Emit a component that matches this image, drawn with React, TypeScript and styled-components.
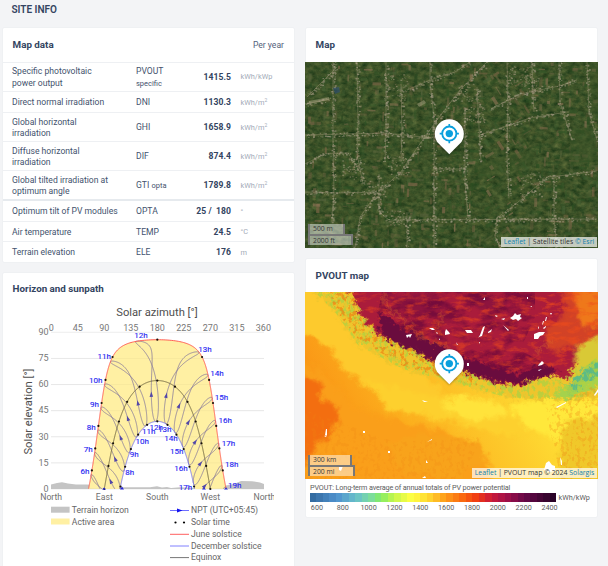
import React from 'react';
import styled, { createGlobalStyle } from 'styled-components';

const Global = createGlobalStyle`
  * { box-sizing: border-box; }
  body { margin: 0; background: #f3f4f6; overflow: hidden; font-family: Roboto, 'Liberation Sans', sans-serif; color: #334461; }
  filter { color-interpolation-filters: sRGB; }
`;

const Page = styled.main`
  width: 608px;
  height: 566px;
  overflow: hidden;
  padding-left: 3px;
  background: #f3f4f6;
`;
const PageTitle = styled.h1`
  margin: 0;
  padding: 3px 0 0 8.5px;
  height: 28px;
  font-size: 10px;
  line-height: 13px;
  font-weight: 600;
`;
const Columns = styled.div`
  display: grid;
  grid-template-columns: 291px 293px;
  column-gap: 11px;
  align-items: start;
`;
const Column = styled.div`
  display: flex;
  flex-direction: column;
  gap: 11px;
  min-width: 0;
`;
const Card = styled.section<{ $height: number; $inset?: boolean }>`
  height: ${(p) => p.$height}px;
  margin: 0 ${(p) => (p.$inset ? 1 : 0)}px;
  background: #fff;
  border-radius: 1px;
  box-shadow: 0 0 1px rgba(50, 70, 90, 0.16);
`;
const CardHeader = styled.header<{ $height: number }>`
  display: flex;
  align-items: center;
  justify-content: space-between;
  height: ${(p) => p.$height}px;
  padding: 0 10px 0 9.6px;
`;
const CardTitle = styled.h2`
  margin: 0;
  font-size: 9.8px;
  line-height: 12px;
  font-weight: 700;
`;
const Period = styled.span`
  font-size: 8.6px;
  color: #53617a;
`;
const Row = styled.div<{ $height: number; $thick?: boolean; $shift: number }>`
  display: grid;
  grid-template-columns: 124px 50px 45px 1fr;
  align-items: center;
  height: ${(p) => p.$height}px;
  padding: ${(p) => p.$shift}px 0 0 9px;
  border-top: ${(p) => (p.$thick ? '2px solid #e6eaee' : '1px solid #eef0f3')};
  font-size: 8.6px;
  line-height: 11.4px;
  color: #43526d;
`;
const RowName = styled.span`
  white-space: pre-line;
`;
const Code = styled.span`
  small { font-size: 7.5px; }
`;
const Value = styled.span`
  text-align: right;
  font-weight: 700;
  letter-spacing: 0.06px;
  color: #334461;
  white-space: pre;
`;
const Unit = styled.span`
  padding: 0 0 1px 9.5px;
  font-size: 7.4px;
  color: #a3abb8;
  sup { font-size: 5px; line-height: 0; }
`;

const rows: { name: string; code: React.ReactNode; value: string; unit: React.ReactNode; h: number; thick?: boolean }[] = [
  { name: 'Specific photovoltaic\npower output', code: <>PVOUT<br /><small>specific</small></>, value: '1415.5', unit: 'kWh/kWp', h: 29 },
  { name: 'Direct normal irradiation', code: 'DNI', value: '1130.3', unit: <>kWh/m<sup>2</sup></>, h: 21 },
  { name: 'Global horizontal\nirradiation', code: 'GHI', value: '1658.9', unit: <>kWh/m<sup>2</sup></>, h: 29 },
  { name: 'Diffuse horizontal\nirradiation', code: 'DIF', value: '874.4', unit: <>kWh/m<sup>2</sup></>, h: 29 },
  { name: 'Global tilted irradiation at\noptimum angle', code: <>GTI <small>opta</small></>, value: '1789.8', unit: <>kWh/m<sup>2</sup></>, h: 29 },
  { name: 'Optimum tilt of PV modules', code: 'OPTA', value: '25 /  180', unit: '°', h: 22, thick: true },
  { name: 'Air temperature', code: 'TEMP', value: '24.5', unit: '°C', h: 20 },
  { name: 'Terrain elevation', code: 'ELE', value: '176', unit: 'm', h: 21 },
];

/* ---------- Sun path chart ---------- */
const ChartSvg = styled.svg`
  display: block;
  width: 291px;
  height: 261px;
  font-family: Roboto, sans-serif;
`;
const rad = Math.PI / 180;
const LAT = 27.7;
const px = (az: number) => 51.2 + az * 0.5895;
const py = (el: number) => 489 - el * 1.741;

function sun(decl: number, hour: number) {
  const h = (hour - 12) * 15 * rad;
  const d = decl * rad;
  const l = LAT * rad;
  const el = Math.asin(Math.sin(l) * Math.sin(d) + Math.cos(l) * Math.cos(d) * Math.cos(h));
  const az = Math.atan2(-Math.cos(d) * Math.sin(h), Math.sin(d) * Math.cos(l) - Math.cos(d) * Math.sin(l) * Math.cos(h));
  return { az: (az / rad + 360) % 360, el: el / rad };
}
const toPath = (pts: number[][]) => pts.map((p, i) => `${i ? 'L' : 'M'}${p[0].toFixed(2)} ${p[1].toFixed(2)}`).join('');
function dayPoints(decl: number) {
  const pts: number[][] = [];
  for (let t = 4; t <= 20; t += 0.02) {
    const s = sun(decl, t);
    if (s.el >= 0) pts.push([px(s.az), py(s.el)]);
  }
  return pts;
}
function dayOf(day: number, clock: number) {
  const b = ((day - 81) * 360) / 365 * rad;
  const eot = 9.87 * Math.sin(2 * b) - 7.53 * Math.cos(b) - 1.5 * Math.sin(b);
  const decl = 23.45 * Math.sin(b);
  return sun(decl, clock + (eot - 11.2) / 60);
}
function analemma(clock: number) {
  let out = '';
  let open = false;
  for (let d = 0; d <= 365; d += 1) {
    const s = dayOf(d, clock);
    if (s.el < 0) { open = false; continue; }
    out += `${open ? 'L' : 'M'}${px(s.az).toFixed(2)} ${py(s.el).toFixed(2)}`;
    open = true;
  }
  return out;
}
const june = dayPoints(23.45);
const december = dayPoints(-23.45);
const equinox = dayPoints(0);
const solarDots: number[][] = [];
[23.45, 0, -23.45].forEach((d) => {
  for (let t = 5; t <= 19; t++) {
    const s = sun(d, t);
    if (s.el > -0.3) solarDots.push([px(s.az), py(s.el)]);
  }
});
const clockHours = [6, 7, 8, 9, 10, 11, 12, 13, 14, 15, 16, 17, 18];
const arrows = clockHours.map((h) => {
  const a = dayOf(62, h);
  const b = dayOf(66, h);
  const x = px(a.az), y = py(a.el);
  return { x, y, el: a.el, r: Math.atan2(py(b.el) - y, px(b.az) - x) / rad };
}).filter((a) => a.el > 1);

const hourLabels: [string, number, number][] = [
  ['12h', 141, 338], ['11h', 104.3, 358.7], ['10h', 95.7, 383.3], ['9h', 94.5, 407.3], ['8h', 91.2, 430], ['7h', 88.3, 452.3], ['6h', 85, 473.8],
  ['13h', 205, 351.7], ['14h', 217, 376.3], ['15h', 221.5, 400], ['16h', 225.3, 423.3], ['17h', 228.5, 445.8], ['18h', 231.7, 467.3], ['19h', 234.7, 488.2],
  ['8h', 129.7, 474.5], ['9h', 134.3, 457], ['10h', 142.3, 443.7], ['11h', 148.7, 433.7], ['12h', 156.3, 429.7], ['13h', 164.7, 432], ['14h', 171, 440.8], ['15h', 176.7, 454.3], ['16h', 181, 471], ['17h', 185.5, 489.8],
];

function SunChart() {
  return (
    <ChartSvg viewBox="3 305 291 261">
      <defs>
        <clipPath id="plot"><rect x="51" y="333" width="213" height="156.5" /></clipPath>
        <clipPath id="axis"><rect x="30" y="300" width="244" height="266" /></clipPath>
      </defs>
      {[0, 15, 30, 45, 60, 75, 90].map((v) => (
        <g key={v}>
          <path d={`M51 ${py(v)}H264`} stroke="#eaeaea" strokeWidth="0.8" />
          <text x="48.5" y={py(v) + 2.8} textAnchor="end" fontSize="9" fill="#777">{v}</text>
        </g>
      ))}
      {[0, 45, 90, 135, 180, 225, 270, 315, 360].map((v) => (
        <text key={v} x={px(v)} y="331.2" textAnchor="middle" fontSize="9" fill="#777">{v}</text>
      ))}
      <path d="M51 489V484.5L57 483L62 482.2L68 483.5L76 484.5L86 484.5L97 485L104 486L118 487.2L150 487.2L157 486.3L162 487.5L167 487L171 488L180 487.2L204 488.5L215 486.8L229 485L234 484L241 481L252 481.2L260 482.5L264 484V489Z" fill="#c4c4c4" />
      <path d={toPath(june) + toPath([...december].reverse()).replace('M', 'L') + 'Z'} fill="#fff0a3" />
      {[15, 30, 45, 60, 75].map((v) => <path key={v} d={`M51 ${py(v)}H264`} stroke="#00000008" />)}
      <g clipPath="url(#plot)" fill="none">
        {clockHours.concat([5, 19]).map((h) => <path key={h} d={analemma(h)} stroke="#82759a" strokeWidth="0.8" />)}
        <path d={toPath(equinox)} stroke="#6d6440" strokeWidth="0.9" />
        <path d={toPath(june)} stroke="#ff5a50" strokeWidth="0.95" />
        <path d={toPath(december)} stroke="#6868f0" strokeWidth="0.8" />
      </g>
      {arrows.map((a, i) => <path key={i} d="M3 0L-2.4 -1.8V1.8Z" transform={`translate(${a.x} ${a.y}) rotate(${a.r})`} fill="#5348a8" />)}
      {solarDots.map((d, i) => <circle key={i} cx={d[0]} cy={d[1]} r="1.1" fill="#171208" />)}
      <path d="M102 489.5l2-2 2 2ZM120 489.5l2-3 2 3ZM202 489.5l2-2 2 2ZM224 489.5l2-2 2 2Z" fill="#2828d8" />
      <g fill="#2c2cf2" fontSize="8" textAnchor="middle" stroke="#2c2cf2" strokeWidth="0.15">
        {hourLabels.map(([t, x, y], i) => <text key={i} x={x} y={y}>{t}</text>)}
      </g>
      <g fontSize="11.2" fill="#4f4f4f">
        <text x="157" y="315.8" textAnchor="middle">Solar azimuth [°]</text>
        <text transform="translate(32 411.5) rotate(-90)" textAnchor="middle">Solar elevation [°]</text>
      </g>
      <g fontSize="8.7" fill="#707070" textAnchor="middle" clipPath="url(#axis)">
        {['North', 'East', 'South', 'West', 'North'].map((t, i) => <text key={i} x={px(i * 90) + (i === 4 ? 1 : 0)} y="499.7">{t}</text>)}
      </g>
      <g fontSize="8.6" fill="#666">
        <rect x="51" y="506.7" width="18.6" height="6" fill="#c4c4c4" />
        <rect x="51" y="518.5" width="18.6" height="6" fill="#fff0a3" />
        <text x="71.8" y="513.2">Terrain horizon</text>
        <text x="71.8" y="525">Active area</text>
        <path d="M170 510.5H189" stroke="#4949ff" strokeWidth="0.8" />
        <path d="M182.5 510.5l-5.5-2v4z" fill="#1212ee" />
        <circle cx="175.5" cy="522.5" r="1.1" fill="#000" /><circle cx="184" cy="522.5" r="1.1" fill="#000" />
        <path d="M170 534.3H189" stroke="#ff6060" />
        <path d="M170 546H189" stroke="#8080ff" />
        <path d="M170 557.6H189" stroke="#777" />
        <text x="191" y="513.2">NPT (UTC+05:45)</text>
        <text x="191" y="525">Solar time</text>
        <text x="191" y="536.8">June solstice</text>
        <text x="191" y="548.6" textLength="70.5">December solstice</text>
        <text x="191" y="560.4">Equinox</text>
      </g>
    </ChartSvg>
  );
}

/* ---------- Maps ---------- */
const MapFrame = styled.div<{ $height: number }>`
  position: relative;
  height: ${(p) => p.$height}px;
  margin: 0 -1px;
  overflow: hidden;
  font-family: 'Open Sans', 'Noto Sans', sans-serif;
`;
const MapSvg = styled.svg`
  display: block;
  width: 293px;
  height: 100%;
`;
const PinSvg = styled.svg`
  position: absolute;
  left: 126px;
  top: 53px;
  width: 37px;
  height: 44px;
`;
const Scale = styled.div`
  position: absolute;
  left: 3px;
  bottom: 3px;
  display: flex;
  flex-direction: column;
  align-items: flex-start;
`;
const ScaleLine = styled.div<{ $width: number; $lower?: boolean }>`
  width: ${(p) => p.$width}px;
  height: ${(p) => (p.$lower ? 11 : 10)}px;
  padding-left: 3px;
  border: 2px solid #777;
  border-width: ${(p) => (p.$lower ? '2px 2px 0' : '0 2px 0')};
  background: rgba(255, 255, 255, 0.48);
  color: #383838;
  font-size: 6.8px;
  line-height: 10px;
  white-space: nowrap;
`;
const Attribution = styled.div<{ $width: number }>`
  position: absolute;
  right: 1px;
  bottom: 1px;
  width: ${(p) => p.$width}px;
  height: 10px;
  background: rgba(255, 255, 255, 0.7);
  color: #333;
  font-size: 6.9px;
  line-height: 10px;
  text-align: center;
  white-space: nowrap;
`;
const Credit = styled.span`
  color: #0f80ad;
`;

function Pin() {
  return (
    <PinSvg viewBox="0 0 37 44">
      <defs><filter id="pinShadow" x="-30%" y="-30%" width="160%" height="160%"><feDropShadow dx="0" dy="0.6" stdDeviation="1" floodColor="#000" floodOpacity="0.35" /></filter></defs>
      <path d="M18.3 39.2L7.6 28.6A14.5 14.5 0 1 1 29 28.6Z" fill="#fff" filter="url(#pinShadow)" />
      <g stroke="#0a9fdd" fill="none">
        <circle cx="18.3" cy="18.6" r="7.1" strokeWidth="1.8" />
        <path d="M18.3 9v2.8M18.3 25.4v2.8M8.7 18.6h2.8M25.1 18.6h2.8" strokeWidth="1.7" />
      </g>
      <circle cx="18.3" cy="18.6" r="3.7" fill="#0a9fdd" />
    </PinSvg>
  );
}

function seeded(seed: number) {
  let s = seed;
  return () => {
    s = (s * 16807) % 2147483647;
    return s / 2147483647;
  };
}
const rnd = seeded(4217);
const fieldColors = ['#2a4c20', '#2f5225', '#3a5a2b', '#26451f', '#37582c', '#466034', '#56623b', '#66603e', '#7c6547', '#8c7354'];
const fields = Array.from({ length: 950 }, () => {
  const wide = rnd() > 0.5;
  return {
    x: rnd() * 293, y: rnd() * 186,
    w: wide ? 3 + rnd() * 7 : 1 + rnd() * 2.5, h: wide ? 1 + rnd() * 2.5 : 3 + rnd() * 7,
    c: fieldColors[Math.floor(Math.pow(rnd(), 1.25) * 10)], o: 0.3 + rnd() * 0.4,
  };
});
const roads: number[][][] = [
  [[28, 0], [28, 80], [29, 130], [27, 160]], [[52, 0], [53, 60], [52, 92], [58, 122]], [[81, 0], [81, 70], [80, 100]],
  [[96, 22], [97, 70], [96, 100]], [[125, 0], [125, 20], [129, 55], [129, 186]], [[160, 45], [160, 120], [163, 156]],
  [[172, 25], [174, 65], [176, 100]], [[202, 0], [203, 40], [202, 95], [204, 135]], [[227, 0], [228, 32], [229, 50]],
  [[254, 0], [255, 40], [267, 78]], [[282, 0], [284, 50], [292, 78]], [[249, 115], [249, 156], [252, 186]],
  [[182, 0], [155, 28], [132, 58], [112, 86], [95, 111], [72, 131], [55, 155], [50, 186]],
  [[32, 5], [20, 17], [2, 35]], [[0, 130], [32, 131], [72, 130]], [[74, 112], [74, 150], [84, 158], [292, 157]],
  [[192, 156], [217, 137], [242, 115], [262, 113], [292, 109]], [[175, 73], [205, 63], [225, 56], [262, 50]],
  [[0, 73], [80, 71], [127, 76]], [[102, 28], [125, 18], [150, 10], [165, 0]], [[186, 47], [215, 32], [254, 24], [272, 18]],
  [[192, 156], [190, 175], [196, 186]], [[102, 150], [102, 186]], [[0, 42], [25, 37]], [[128, 107], [160, 107]], [[0, 102], [20, 92], [43, 91], [55, 110]],
];
const houses: { x: number; y: number; r: number; c: string }[] = [];
roads.forEach((road) => {
  for (let i = 1; i < road.length; i++) {
    const [ax, ay] = road[i - 1];
    const [bx, by] = road[i];
    const n = Math.hypot(bx - ax, by - ay) * 0.95;
    for (let k = 0; k < n; k++) {
      const t = rnd();
      houses.push({
        x: ax + (bx - ax) * t + (rnd() - 0.5) * 4, y: ay + (by - ay) * t + (rnd() - 0.5) * 4,
        r: 0.6 + rnd() * 1, c: ['#aba28a', '#968f72', '#9a917c', '#757b5a'][Math.floor(rnd() * 4)],
      });
    }
  }
});
[[92, 25, 13], [93, 103, 10], [71, 128, 10], [171, 52, 8], [215, 14, 10], [228, 22, 9], [48, 106, 11], [90, 156, 9], [227, 122, 12], [161, 30, 9]].forEach(([x, y, r]) => {
  for (let i = 0; i < 55; i++) houses.push({ x: x + (rnd() - 0.5) * r * 2, y: y + (rnd() - 0.5) * r * 2, r: 0.6 + rnd() * 0.9, c: ['#9c9376', '#828662', '#756f50'][i % 3] });
});

function SatelliteMap() {
  return (
    <MapSvg viewBox="0 0 293 186">
      <defs>
        <filter id="ground" x="0" y="0" width="100%" height="100%">
          <feTurbulence type="fractalNoise" baseFrequency="0.16 0.22" numOctaves="4" seed="7" />
          <feColorMatrix values="0.3 0.1 0 0 0.035  0.22 0.12 0 0 0.15  0.14 0.08 0 0 0.045  0 0 0 0 1" />
        </filter>
      </defs>
      <rect width="293" height="186" fill="#35502a" />
      <rect width="293" height="186" filter="url(#ground)" />
      {fields.map((f, i) => <rect key={i} x={f.x} y={f.y} width={f.w} height={f.h} fill={f.c} opacity={f.o} transform={`rotate(${f.x > 175 && f.x < 220 ? -32 : 2} ${f.x} ${f.y})`} />)}
      <path d="M280 0H293V60L283 48ZM264 66H293V98L266 104ZM170 102L230 87L225 104L174 118Z" fill="#3b5629" opacity="0.4" />
      <g fill="none" stroke="#989070" strokeWidth="0.75" opacity="0.6">
        {roads.map((r, i) => <path key={i} d={toPath(r)} />)}
      </g>
      {houses.map((h, i) => <rect key={i} x={h.x} y={h.y} width={h.r * 1.3} height={h.r} fill={h.c} opacity="0.66" />)}
      <path d="M28 26l6-1 1 5-5 2z" fill="#30506c" opacity="0.7" />
      <path d="M112 42l7-4 2 3-7 4zM4 39l20-4v3L4 42z" fill="#aaa382" opacity="0.5" />
    </MapSvg>
  );
}

const lakes = [
  'M124 36l4 0 2 2-3 0zM131 40l2 1-1 1zM140 40l1-3 3 3 1 2-5 1zM134 46l1 2-1 0z',
  'M160 38l6 0 2 3-6 0zM173 46l2-3 3-8 2-1-3 10-3 1zM174 50l1 0v2zM183 40l4-3-1 3-3 1z',
  'M205 26l3-2 2-3 2 2 4-1-1 3 2 1-4 3-2-2-3 1zM196 27l4-1-1 2zM198 33l6 5-1 1zM190 23l3 1-2 1z',
  'M229 42l5-2 6 0-2 3-3 1-2 3-4 0zM238 36l3-2 0 1-2 2zM237 33l1-4 1 0-1 3zM240 29l1-4 1 0-1 4zM233 36l1-2v3zM245 21h2l-1 2zM225 15l2-1v1z',
  'M237 69l2 2-2 2-4 1 1-2zM233 78l4-1-3 2zM251 115l10-5v1l-9 5zM289 103l4-6v3l-3 4zM222 5h1v2h-1zM178 8l2-3 0 3zM151 50l2 3-1 0zM162 71h2v3h-2z',
  'M101 43l6-1-2 4-1-2-2 2z',
  'M117 108l6 2h-4zM122 150l5-3v1zM21 137h1v6h-2zM19 144l3-1-1 2zM58 139h2v2h-2zM83 159h2v2h-2zM121 168l2 3h-2z',
  'M239 178l2-7 3-2 3 4 3 1v5l-6 1zM255 165l2 4v4h-1zM117 186l3-2 1 2zM34 175l4-1-2 5-2-1z',
];
function PvoutMap() {
  return (
    <MapSvg viewBox="0 0 293 187">
      <defs>
        <filter id="soft" x="-10%" y="-10%" width="120%" height="120%">
          <feGaussianBlur stdDeviation="2.2" result="b" />
          <feTurbulence type="fractalNoise" baseFrequency="0.09" numOctaves="4" seed="4" />
          <feDisplacementMap in="b" scale="14" xChannelSelector="R" yChannelSelector="G" />
        </filter>
        <filter id="edge" x="-5%" y="-5%" width="110%" height="110%">
          <feGaussianBlur stdDeviation="0.8" result="b" />
          <feTurbulence type="fractalNoise" baseFrequency="0.2" numOctaves="4" seed="9" />
          <feDisplacementMap in="b" scale="14" xChannelSelector="R" yChannelSelector="G" />
        </filter>
        <filter id="redGrain" x="0" y="0" width="100%" height="100%">
          <feTurbulence type="fractalNoise" baseFrequency="0.08 0.2" numOctaves="5" seed="18" />
          <feColorMatrix values="0 0 0 0 0.91  0 0 0 0 0.27  0 0 0 0 0.12  3 1 0 0 -1.95" result="n" />
          <feComposite in="n" in2="SourceGraphic" operator="in" />
        </filter>
        <filter id="darkGrain" x="0" y="0" width="100%" height="100%">
          <feTurbulence type="fractalNoise" baseFrequency="0.05 0.1" numOctaves="5" seed="32" />
          <feColorMatrix values="0 0 0 0 0.42  0 0 0 0 0.03  0 0 0 0 0.23  3.4 1 0 0 -1.85" result="n" />
          <feComposite in="n" in2="SourceGraphic" operator="in" />
        </filter>
        <filter id="greenGrain" x="0" y="0" width="100%" height="100%">
          <feTurbulence type="fractalNoise" baseFrequency="0.24 0.17" numOctaves="4" seed="14" />
          <feColorMatrix values="0 0 0 0 0.7  0 0 0 0 0.82  0 0 0 0 0.25  6 0 0 0 -2.8" result="n" />
          <feComposite in="n" in2="SourceGraphic" operator="in" />
        </filter>
        <filter id="orangeGrain" x="0" y="0" width="100%" height="100%">
          <feTurbulence type="fractalNoise" baseFrequency="0.25 0.2" numOctaves="4" seed="41" />
          <feColorMatrix values="0 0 0 0 0.94  0 0 0 0 0.52  0 0 0 0 0.08  6 0 0 0 -3" result="n" />
          <feComposite in="n" in2="SourceGraphic" operator="in" />
        </filter>
        <linearGradient id="plain" x1="0" y1="0.7" x2="1" y2="0.35">
          <stop offset="0" stopColor="#f98c13" /><stop offset="0.3" stopColor="#fcae1d" /><stop offset="0.6" stopColor="#fdcc2c" /><stop offset="0.8" stopColor="#ffe236" /><stop offset="1" stopColor="#fbd02b" />
        </linearGradient>
      </defs>
      <rect width="293" height="187" fill="url(#plain)" />
      <g filter="url(#soft)">
        <path d="M-20 -15H38L60 38L120 84L150 112L75 101L38 80L25 55L-20 35Z" fill="#fdca2d" />
        <path d="M-20 62L22 82L48 114L95 130L140 138L186 175L182 210H-20Z" fill="#fa9f1a" />
        <path d="M-20 78L10 86L18 106L34 117L26 145L12 152L-5 180H-20Z" fill="#f36e10" />
        <path d="M60 88L130 105L200 115L235 142L190 142L135 127L82 116Z" fill="#fdd02e" />
        <path d="M138 111L155 104L190 111L208 123L169 129L145 121Z" fill="#ffe33b" />
        <path d="M205 113L230 108L310 108V143L270 155L220 135Z" fill="#ffe83b" />
        <path d="M80 150L122 142L173 150L181 165L145 190L100 181Z" fill="#f8a31b" />
        <path d="M260 130L310 120V200H250Z" fill="#f0c82a" />
      </g>
      <path d="M8 0H54L70 36L110 56L164 80L205 90L259 82L276 63L293 40V107L250 108L205 107L174 98L142 89L98 77L53 53L30 20Z" fill="#eec52d" filter="url(#edge)" />
      <path d="M10 0H55L72 38L110 56L164 81L205 88L259 82L276 63L293 40V104L250 107L205 106L174 98L142 89L98 77L53 53L30 20Z" fill="#fff" filter="url(#greenGrain)" opacity="0.8" />
      <path d="M22 0H55L72 38L110 56L164 81L174 95L98 74L53 47L32 20Z" fill="#fff" filter="url(#orangeGrain)" opacity="0.75" />
      <path d="M42 -8H305V35L284 58L266 78L263 88L246 83L225 88L214 94L190 90L163 81L147 70L125 69L111 56L92 51L74 43L56 24Z" fill="#aa1c3b" filter="url(#edge)" />
      <path d="M80 3L123 0L144 8L137 21L115 26L89 12ZM157 5L211 5L195 21L166 16Z" fill="#7d1040" filter="url(#soft)" opacity="0.6" />
      <path d="M77 0H230V25L215 58L252 78L214 88L163 78L144 65L112 55L87 44L72 25Z" fill="#fff" filter="url(#darkGrain)" opacity="0.7" />
      <path d="M46 0H293V35L277 60L261 78L216 84L163 70L147 58L125 55L91 38L60 20Z" fill="#fff" filter="url(#redGrain)" opacity="0.62" />
      <g filter="url(#edge)" fill="#6a0c3e">
        <path d="M74 18L98 37L120 46L147 60L164 67L184 73L214 83L235 72L255 80L227 88L214 92L187 88L163 81L146 71L125 68L109 58L91 52L75 41Z" />
      </g>
      <g filter="url(#soft)"><path d="M252 -12H310V45L273 53L244 61L238 39L261 20Z" fill="#ed5b19" opacity="0.6" /><path d="M267 -10H310V24L277 38Z" fill="#f78618" opacity="0.8" /><path d="M272 53L310 38V68L268 82Z" fill="#d9c936" /></g>
      <path d="M235 0H293V45L268 65L240 55Z" fill="#fff" filter="url(#redGrain)" opacity="0.5" />
      <g filter="url(#edge)"><path d="M248 103L265 93L278 77L300 64V91L275 102L260 108Z" fill="#a5d24c" /><path d="M263 94L278 78L300 66V81L278 90L265 101Z" fill="#5dbb85" /></g>
      <path d="M245 105L265 93L280 75L293 64V95L275 102Z" fill="#fff" filter="url(#greenGrain)" opacity="0.8" />
      <g filter="url(#edge)" stroke="#e67c27" fill="none" opacity="0.65" strokeWidth="1.2"><path d="M77 0L84 18L100 28L118 46L148 58" /><path d="M138 20L132 40" /><path d="M164 64L210 68L260 66" stroke="#bd2336" /><path d="M230 62L248 47" /></g>
      <path d="M240 116L293 92V187H256Z" fill="#fff" filter="url(#orangeGrain)" opacity="0.3" />
      <path d="M0 118L90 150L176 145L158 187H0Z" fill="#fff" filter="url(#orangeGrain)" opacity="0.22" />
      <g fill="#fff">{lakes.map((d, i) => <path key={i} d={d} />)}</g>
    </MapSvg>
  );
}

/* ---------- Colour legend ---------- */
const Legend = styled.div`
  padding: 3px 4px 0;
  color: #5c5c5c;
`;
const LegendTitle = styled.div`
  font-size: 7.25px;
  line-height: 11px;
  letter-spacing: -0.16px;
  white-space: nowrap;
`;
const BarRow = styled.div`
  display: flex;
  align-items: center;
  gap: 2px;
  font-size: 7.3px;
  line-height: 9px;
`;
const Bar = styled.div`
  display: flex;
  width: 246.5px;
  height: 9px;
`;
const Swatch = styled.span<{ $color: string }>`
  flex: 1;
  background: ${(p) => p.$color};
`;
const Ticks = styled.div`
  display: grid;
  grid-template-columns: repeat(10, 25.85px);
  margin: 1px 0 0 -6px;
  font-size: 7.2px;
  line-height: 9px;
  text-align: center;
`;
const stops: [number, number, number, number][] = [
  [0, 52, 108, 162], [0.1, 80, 146, 206], [0.18, 104, 192, 202], [0.24, 124, 220, 160], [0.28, 130, 236, 100], [0.34, 200, 247, 76], [0.41, 255, 255, 68],
  [0.48, 255, 216, 48], [0.54, 254, 164, 28], [0.62, 250, 106, 16], [0.68, 240, 60, 18], [0.74, 204, 26, 56], [0.8, 164, 16, 72], [0.88, 104, 8, 72], [1, 42, 3, 40],
];
const swatches = Array.from({ length: 38 }, (_, i) => {
  const t = i / 37;
  const k = Math.max(1, stops.findIndex((s) => s[0] >= t));
  const a = stops[k - 1], b = stops[k];
  const f = (t - a[0]) / (b[0] - a[0]);
  return `rgb(${[1, 2, 3].map((j) => Math.round(a[j] + (b[j] - a[j]) * f)).join(',')})`;
});

export default function App() {
  return (
    <Page>
      <Global />
      <PageTitle>SITE INFO</PageTitle>
      <Columns>
        <Column>
          <Card $height={234}>
            <CardHeader $height={34}><CardTitle>Map data</CardTitle><Period>Per year</Period></CardHeader>
            {rows.map((r, i) => (
              <Row key={r.name} $height={r.h} $thick={r.thick} $shift={i === 0 ? 1 : 2}>
                <RowName>{r.name}</RowName><Code>{r.code}</Code><Value>{r.value}</Value><Unit>{r.unit}</Unit>
              </Row>
            ))}
          </Card>
          <Card $height={310}>
            <CardHeader $height={32}><CardTitle>Horizon and sunpath</CardTitle></CardHeader>
            <SunChart />
          </Card>
        </Column>
        <Column>
          <Card $height={220} $inset>
            <CardHeader $height={34}><CardTitle>Map</CardTitle></CardHeader>
            <MapFrame $height={186}>
              <SatelliteMap />
              <Pin />
              <Scale><ScaleLine $width={37}>500 m</ScaleLine><ScaleLine $width={45} $lower>2000 ft</ScaleLine></Scale>
              <Attribution $width={96}><Credit>Leaflet</Credit> | Satellite tiles <Credit>© Esri</Credit></Attribution>
            </MapFrame>
          </Card>
          <Card $height={258} $inset>
            <CardHeader $height={33}><CardTitle>PVOUT map</CardTitle></CardHeader>
            <MapFrame $height={187}>
              <PvoutMap />
              <Pin />
              <Scale><ScaleLine $width={44}>300 km</ScaleLine><ScaleLine $width={47} $lower>200 mi</ScaleLine></Scale>
              <Attribution $width={125}><Credit>Leaflet</Credit> | PVOUT map © 2024 <Credit>Solargis</Credit></Attribution>
            </MapFrame>
            <Legend>
              <LegendTitle>PVOUT: Long-term average of annual totals of PV power potential</LegendTitle>
              <BarRow><Bar>{swatches.map((c, i) => <Swatch key={i} $color={c} />)}</Bar>kWh/kWp</BarRow>
              <Ticks>{[600, 800, 1000, 1200, 1400, 1600, 1800, 2000, 2200, 2400].map((v) => <span key={v}>{v}</span>)}</Ticks>
            </Legend>
          </Card>
        </Column>
      </Columns>
    </Page>
  );
}
